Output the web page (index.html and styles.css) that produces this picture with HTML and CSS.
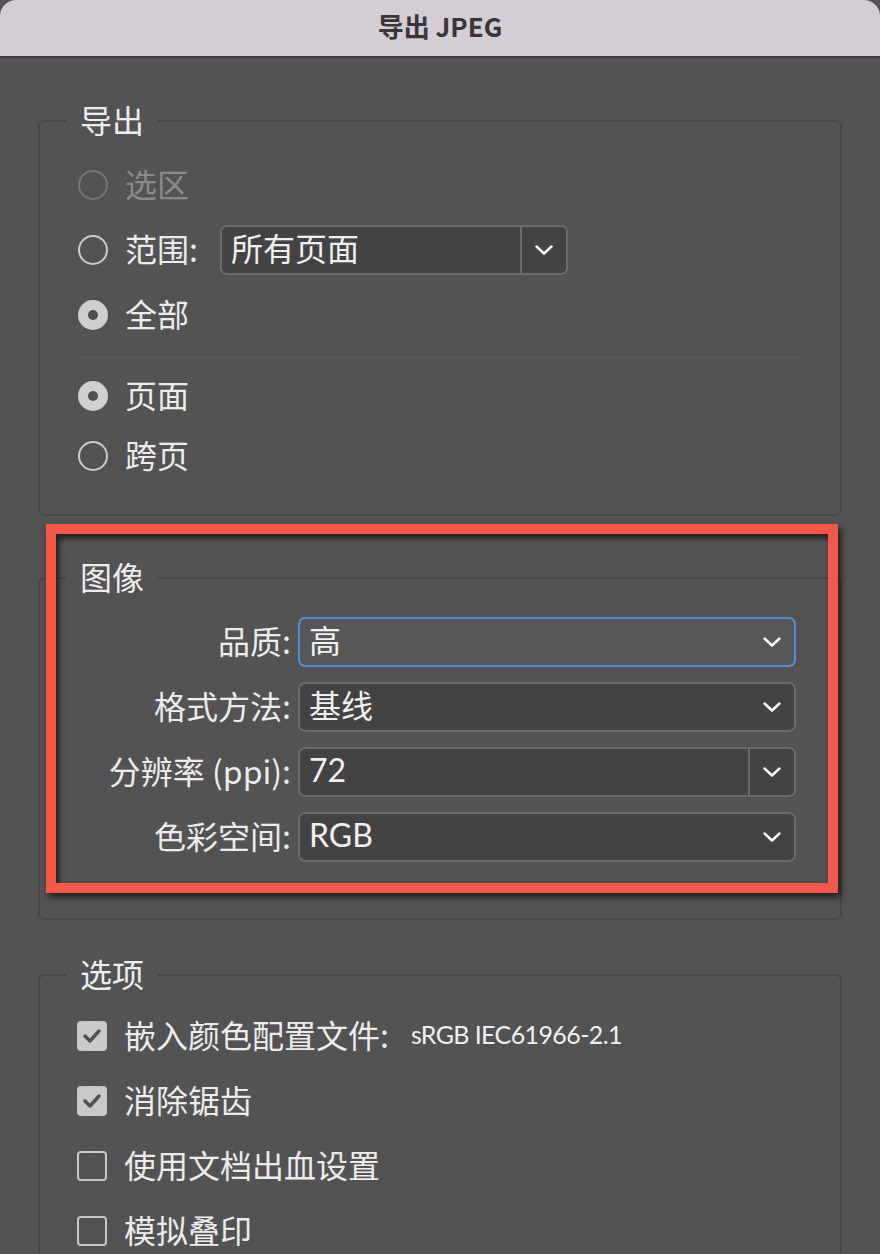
FILE: index.html
```html
<!DOCTYPE html>
<html lang="zh-CN">
<head>
    <meta charset="UTF-8">
    <meta name="viewport" content="width=device-width, initial-scale=1.0">
    <title>导出 JPEG</title>
    <link rel="stylesheet" href="styles.css">
</head>
<body>
    <div class="window">
        <div class="titlebar">导出 JPEG</div>

        <!-- Export range -->
        <fieldset class="group group-export">
            <legend>导出</legend>
            <div class="group-body">
                <div class="row disabled">
                    <span class="radio"></span>
                    <span class="text">选区</span>
                </div>
                <div class="row">
                    <span class="radio"></span>
                    <span class="text">范围:</span>
                    <div class="select select-range">
                        <span class="value">所有页面</span>
                        <span class="arrow split">
                            <svg width="18" height="10" viewBox="0 0 18 10"><polyline points="1.5,1.5 9,8.5 16.5,1.5"/></svg>
                        </span>
                    </div>
                </div>
                <div class="row">
                    <span class="radio checked"></span>
                    <span class="text">全部</span>
                </div>
                <div class="separator"></div>
                <div class="row row-pages">
                    <span class="radio checked"></span>
                    <span class="text">页面</span>
                </div>
                <div class="row row-spread">
                    <span class="radio"></span>
                    <span class="text">跨页</span>
                </div>
            </div>
        </fieldset>

        <!-- Image settings -->
        <fieldset class="group group-image">
            <legend>图像</legend>
            <div class="group-body">
                <div class="field">
                    <label>品质:</label>
                    <div class="select focused">
                        <span class="value">高</span>
                        <span class="arrow">
                            <svg width="18" height="10" viewBox="0 0 18 10"><polyline points="1.5,1.5 9,8.5 16.5,1.5"/></svg>
                        </span>
                    </div>
                </div>
                <div class="field">
                    <label>格式方法:</label>
                    <div class="select">
                        <span class="value">基线</span>
                        <span class="arrow">
                            <svg width="18" height="10" viewBox="0 0 18 10"><polyline points="1.5,1.5 9,8.5 16.5,1.5"/></svg>
                        </span>
                    </div>
                </div>
                <div class="field">
                    <label>分辨率 (ppi):</label>
                    <div class="select">
                        <span class="value latin">72</span>
                        <span class="arrow split">
                            <svg width="18" height="10" viewBox="0 0 18 10"><polyline points="1.5,1.5 9,8.5 16.5,1.5"/></svg>
                        </span>
                    </div>
                </div>
                <div class="field">
                    <label>色彩空间:</label>
                    <div class="select">
                        <span class="value latin">RGB</span>
                        <span class="arrow">
                            <svg width="18" height="10" viewBox="0 0 18 10"><polyline points="1.5,1.5 9,8.5 16.5,1.5"/></svg>
                        </span>
                    </div>
                </div>
            </div>
        </fieldset>

        <!-- Options -->
        <fieldset class="group group-options">
            <legend>选项</legend>
            <div class="group-body">
                <div class="row">
                    <span class="checkbox checked">
                        <svg width="18" height="14" viewBox="0 0 18 14"><polyline points="2,7 7,12 16,2"/></svg>
                    </span>
                    <span class="text">嵌入颜色配置文件:</span>
                    <span class="profile">sRGB IEC61966-2.1</span>
                </div>
                <div class="row">
                    <span class="checkbox checked">
                        <svg width="18" height="14" viewBox="0 0 18 14"><polyline points="2,7 7,12 16,2"/></svg>
                    </span>
                    <span class="text">消除锯齿</span>
                </div>
                <div class="row">
                    <span class="checkbox"></span>
                    <span class="text">使用文档出血设置</span>
                </div>
                <div class="row">
                    <span class="checkbox"></span>
                    <span class="text">模拟叠印</span>
                </div>
            </div>
        </fieldset>

        <!-- annotation drawn over the image group -->
        <div class="highlight"></div>
    </div>
</body>
</html>
```

FILE: styles.css
```css
html, body {
    margin: 0;
    padding: 0;
    height: 100%;
    overflow: hidden;
    background-color: #535353;
}

body {
    font-family: "Noto Sans CJK SC", "Lato", sans-serif;
    color: #ececec;
}

.window {
    position: relative;
    width: 880px;
    height: 1254px;
    background-color: #535353;
}

.titlebar {
    height: 56px;
    line-height: 52px;
    text-align: center;
    background-color: #d5cdd5;
    border-bottom: 2px solid #3f3c3f;
    border-radius: 16px 16px 0 0;
    color: #3a3539;
    font-size: 26px;
    font-weight: bold;
}

/* group boxes */
.group {
    margin: 0 38px;
    padding: 0;
    border: 2px solid #474747;
    border-radius: 6px;
    min-width: 0;
}

.group legend {
    margin-left: 26px;
    padding: 0 14px 3px;
    font-size: 32px;
    line-height: 37px;
    color: #ededed;
}

.group-export {
    margin-top: 43px;
}

.group-export .group-body {
    padding: 19px 0 33px 38px;
}

.group-image {
    margin-top: 42px;
}

.group-image .group-body {
    padding: 19px 44px 56px 0;
}

.group-options {
    margin-top: 35px;
}

.group-options .group-body {
    padding: 16px 0 40px 37px;
}

/* rows */
.row {
    display: flex;
    align-items: center;
    height: 50px;
    margin-bottom: 15px;
    font-size: 32px;
}

.row .text {
    line-height: 44px;
    padding-bottom: 4px;
    white-space: nowrap;
}

.row.disabled .text {
    color: #8b8b8b;
}

.row-pages {
    margin-top: 16px;
    margin-bottom: 10px;
}

.row-spread {
    margin-bottom: 0;
}

.separator {
    height: 1px;
    margin: -1px 37px 0 -2px;
    background-color: #4a4a4a;
}

/* radio buttons */
.radio {
    flex: none;
    width: 30px;
    height: 30px;
    margin-right: 17px;
    border: 2px solid #cdcdcd;
    border-radius: 50%;
    box-sizing: border-box;
}

.row.disabled .radio {
    border-color: #777;
}

.radio.checked {
    background-color: #cfcfcf;
    border-color: #cfcfcf;
    display: flex;
    align-items: center;
    justify-content: center;
}

.radio.checked::after {
    content: "";
    width: 10px;
    height: 10px;
    border-radius: 50%;
    background-color: #4f4f4f;
}

/* checkboxes */
.checkbox {
    flex: none;
    width: 30px;
    height: 30px;
    margin-right: 17px;
    border: 2px solid #c8c8c8;
    border-radius: 4px;
    box-sizing: border-box;
    display: flex;
    align-items: center;
    justify-content: center;
}

.checkbox.checked {
    background-color: #c9c9c9;
}

.checkbox svg polyline {
    fill: none;
    stroke: #505050;
    stroke-width: 3.4;
    stroke-linecap: round;
    stroke-linejoin: round;
}

.profile {
    margin-left: 22px;
    padding-bottom: 4px;
    font-family: "Lato", "Noto Sans CJK SC", sans-serif;
    font-size: 25px;
    letter-spacing: -0.6px;
    color: #f0f0f0;
}

/* dropdowns */
.select {
    display: flex;
    align-items: stretch;
    height: 50px;
    box-sizing: border-box;
    border: 2px solid #6a6a6a;
    border-radius: 7px;
    background-color: #434343;
}

.select .value {
    flex: 1;
    padding-left: 9px;
    line-height: 41px;
    font-size: 32px;
    color: #f0f0f0;
    white-space: nowrap;
}

.select .value.latin {
    font-family: "Lato", "Noto Sans CJK SC", sans-serif;
    font-size: 32px;
}

.select .arrow {
    flex: none;
    width: 44px;
    display: flex;
    align-items: center;
    justify-content: center;
}

.select .arrow.split {
    border-left: 2px solid #6a6a6a;
}

.select .arrow svg polyline {
    fill: none;
    stroke: #ffffff;
    stroke-width: 2.4;
    stroke-linecap: round;
    stroke-linejoin: round;
}

.select.focused {
    border-color: #4d8fd8;
    background-color: #575757;
}

.select-range {
    width: 348px;
    margin-left: 22px;
}

/* image group fields */
.field {
    display: grid;
    grid-template-columns: 251px 1fr;
    column-gap: 7px;
    align-items: center;
    margin-bottom: 15px;
}

.field:last-child {
    margin-bottom: 0;
}

.field label {
    text-align: right;
    font-size: 32px;
    line-height: 44px;
    padding-bottom: 4px;
    white-space: nowrap;
}

/* red annotation frame over the image group */
.highlight {
    position: absolute;
    left: 46px;
    top: 524px;
    width: 792px;
    height: 369px;
    box-sizing: border-box;
    border: 10px solid #f5574b;
    filter: drop-shadow(3px 4px 3px rgba(0, 0, 0, 0.65));
}
```
